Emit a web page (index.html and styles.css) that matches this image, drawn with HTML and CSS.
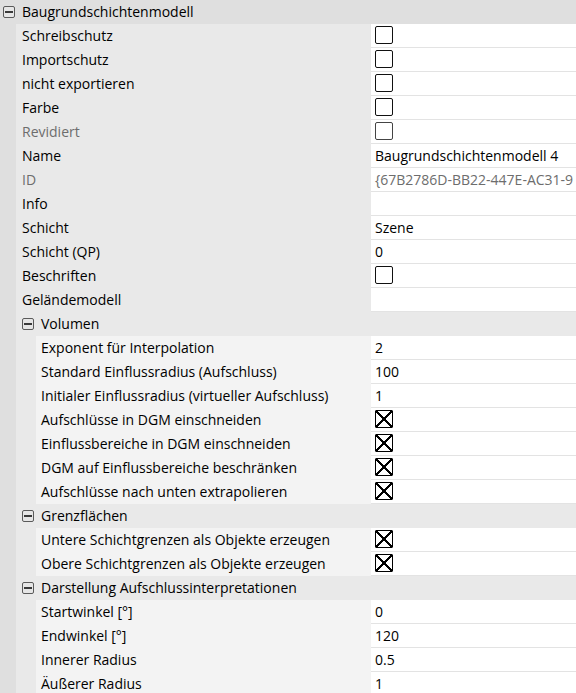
FILE: index.html
```html
<!DOCTYPE html>
<html>
<head>
<meta charset="utf-8">
<link rel="stylesheet" href="styles.css">
</head>
<body>
<div class="grid">
  <div class="hdr"><span class="tog"></span><span class="htext">Baugrundschichtenmodell</span></div>

  <div class="row"><div class="g1"></div><div class="name">Schreibschutz</div><div class="value"><span class="cb"></span></div></div>
  <div class="row"><div class="g1"></div><div class="name">Importschutz</div><div class="value"><span class="cb"></span></div></div>
  <div class="row"><div class="g1"></div><div class="name">nicht exportieren</div><div class="value"><span class="cb"></span></div></div>
  <div class="row"><div class="g1"></div><div class="name">Farbe</div><div class="value"><span class="cb"></span></div></div>
  <div class="row"><div class="g1"></div><div class="name dim">Revidiert</div><div class="value"><span class="cb dimcb"></span></div></div>
  <div class="row"><div class="g1"></div><div class="name">Name</div><div class="value">Baugrundschichtenmodell 4</div></div>
  <div class="row"><div class="g1"></div><div class="name dim">ID</div><div class="value dim">{67B2786D-BB22-447E-AC31-9</div></div>
  <div class="row"><div class="g1"></div><div class="name">Info</div><div class="value"></div></div>
  <div class="row"><div class="g1"></div><div class="name">Schicht</div><div class="value">Szene</div></div>
  <div class="row"><div class="g1"></div><div class="name">Schicht (QP)</div><div class="value">0</div></div>
  <div class="row"><div class="g1"></div><div class="name">Beschriften</div><div class="value"><span class="cb"></span></div></div>
  <div class="row"><div class="g1"></div><div class="name">Geländemodell</div><div class="value"></div></div>

  <div class="row"><div class="g1"></div><div class="ghdr"><span class="tog"></span><span class="gtext">Volumen</span></div></div>
  <div class="row"><div class="g1"></div><div class="g2"></div><div class="name2">Exponent für Interpolation</div><div class="value">2</div></div>
  <div class="row"><div class="g1"></div><div class="g2"></div><div class="name2">Standard Einflussradius (Aufschluss)</div><div class="value">100</div></div>
  <div class="row"><div class="g1"></div><div class="g2"></div><div class="name2">Initialer Einflussradius (virtueller Aufschluss)</div><div class="value">1</div></div>
  <div class="row"><div class="g1"></div><div class="g2"></div><div class="name2">Aufschlüsse in DGM einschneiden</div><div class="value"><span class="cb on"></span></div></div>
  <div class="row"><div class="g1"></div><div class="g2"></div><div class="name2">Einflussbereiche in DGM einschneiden</div><div class="value"><span class="cb on"></span></div></div>
  <div class="row"><div class="g1"></div><div class="g2"></div><div class="name2">DGM auf Einflussbereiche beschränken</div><div class="value"><span class="cb on"></span></div></div>
  <div class="row"><div class="g1"></div><div class="g2"></div><div class="name2">Aufschlüsse nach unten extrapolieren</div><div class="value"><span class="cb on"></span></div></div>

  <div class="row"><div class="g1"></div><div class="ghdr"><span class="tog"></span><span class="gtext">Grenzflächen</span></div></div>
  <div class="row"><div class="g1"></div><div class="g2"></div><div class="name2">Untere Schichtgrenzen als Objekte erzeugen</div><div class="value"><span class="cb on"></span></div></div>
  <div class="row"><div class="g1"></div><div class="g2"></div><div class="name2">Obere Schichtgrenzen als Objekte erzeugen</div><div class="value"><span class="cb on"></span></div></div>

  <div class="row"><div class="g1"></div><div class="ghdr"><span class="tog"></span><span class="gtext">Darstellung Aufschlussinterpretationen</span></div></div>
  <div class="row"><div class="g1"></div><div class="g2"></div><div class="name2">Startwinkel [°]</div><div class="value">0</div></div>
  <div class="row"><div class="g1"></div><div class="g2"></div><div class="name2">Endwinkel [°]</div><div class="value">120</div></div>
  <div class="row"><div class="g1"></div><div class="g2"></div><div class="name2">Innerer Radius</div><div class="value">0.5</div></div>
  <div class="row"><div class="g1"></div><div class="g2"></div><div class="name2">Äußerer Radius</div><div class="value">1</div></div>
</div>
</body>
</html>
```
FILE: styles.css
```css
html, body {
  margin: 0;
  padding: 0;
  background: #ffffff;
  overflow: hidden;
}
.grid {
  width: 576px;
  height: 693px;
  overflow: hidden;
  font-family: "Open Sans", "Noto Sans", sans-serif;
  font-size: 14px;
  color: #000;
}
.hdr {
  height: 24px;
  box-sizing: border-box;
  display: flex;
  align-items: center;
  background: #dfdfdf;
  padding-left: 3px;
  padding-bottom: 1px;
}
.htext { margin-left: 7px; }
.tog {
  position: relative;
  flex: none;
  width: 10px;
  height: 10px;
  border: 1px solid #5a5a5a;
  border-radius: 2px;
  background: #e6e6e6;
}
.tog::after {
  content: "";
  position: absolute;
  left: 1px;
  right: 1px;
  top: 4px;
  height: 2px;
  background: #3a3a3a;
}
.row {
  height: 24px;
  display: flex;
}
.g1 {
  width: 16px;
  flex: none;
  background: #dfdfdf;
}
.g2 {
  width: 20px;
  flex: none;
  background: #e9e9e9;
}
.name, .name2 {
  flex: none;
  box-sizing: border-box;
  display: flex;
  align-items: center;
  white-space: nowrap;
  overflow: hidden;
  padding-bottom: 2px;
}
.name {
  width: 355px;
  padding-left: 6px;
  background: #e9e9e9;
}
.name2 {
  width: 335px;
  padding-left: 5px;
  background: #f3f3f3;
}
.ghdr {
  flex: 1;
  display: flex;
  align-items: center;
  background: #e9e9e9;
  padding-left: 6px;
  padding-bottom: 1px;
}
.gtext { margin-left: 7px; }
.value {
  flex: 1;
  display: flex;
  align-items: center;
  padding-left: 4px;
  padding-bottom: 1px;
  background: #fff;
  border-bottom: 1px solid #e3e3e3;
  white-space: nowrap;
  overflow: hidden;
}
.dim { color: #6d6d6d; }
.cb {
  position: relative;
  box-sizing: border-box;
  width: 18px;
  height: 18px;
  border: 1.6px solid #111;
  border-radius: 2px;
  background: #fff;
}
.cb.dimcb { border-color: #444; }
.cb.on {
  border: 1.2px solid #000;
  border-radius: 1px;
  background:
    linear-gradient(to top right, transparent calc(50% - 0.8px), #000 calc(50% - 0.8px), #000 calc(50% + 0.8px), transparent calc(50% + 0.8px)),
    linear-gradient(to bottom right, transparent calc(50% - 0.8px), #000 calc(50% - 0.8px), #000 calc(50% + 0.8px), transparent calc(50% + 0.8px)),
    #fff;
}
```
